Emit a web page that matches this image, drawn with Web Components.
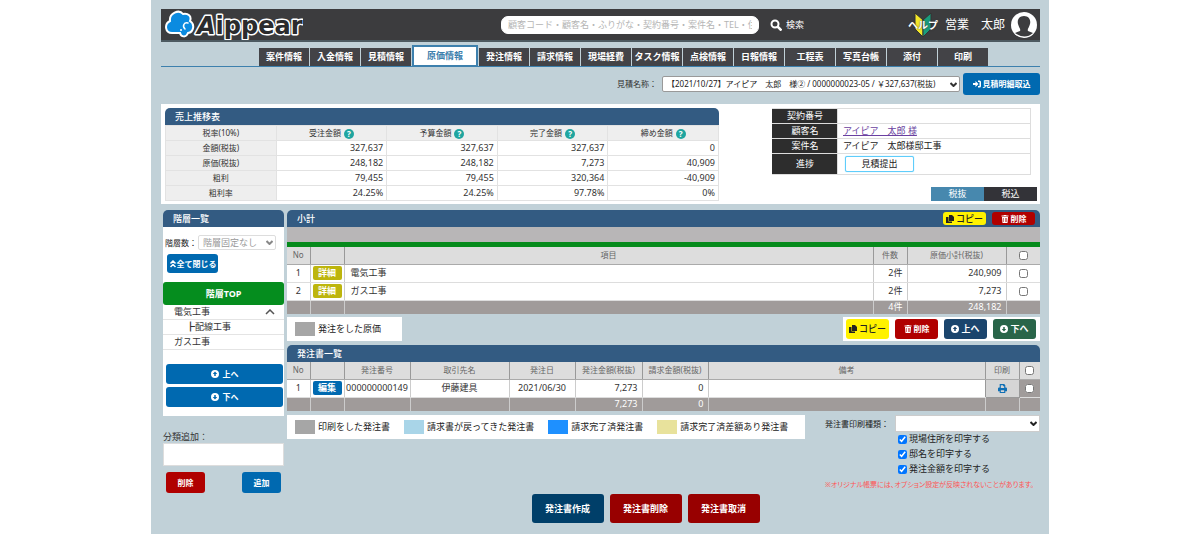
<!DOCTYPE html>
<html lang="ja">
<head>
<meta charset="utf-8">
<title>Aippear 原価情報</title>
<style>
body { margin: 0; background: #fff; color: #333; font: 9px/12px "Noto Sans", "Noto Sans CJK JP", sans-serif; }
</style>
</head>
<body>
<aip-app></aip-app>
<script>
const BASE = `<style>
*, *::before { box-sizing: border-box; }
:host { display: block; }
:host([hidden]) { display: none; }
button, input, select { font: inherit; color: inherit; margin: 0; }
input[type=checkbox] { width: 9px; height: 9px; display: block; }
.pick { display: grid; align-items: center; }
.pick select { grid-area: 1 / 1; width: 100%; min-width: 0; padding: 0 4px; appearance: none; }
.pick svg { grid-area: 1 / 1; justify-self: end; width: 7px; height: 5px; margin-right: 3px; pointer-events: none; fill: none; stroke: currentColor; stroke-width: 2; }
table { border-collapse: collapse; width: 100%; table-layout: fixed; font-size: 9px; line-height: 12px; }
th, td { padding: 0; font-weight: 400; }
</style>`;

const CHEVRON = '<svg viewBox="0 0 7 5" aria-hidden="true"><path d="M.5 1l3 3 3-3"/></svg>';

const define = (name, html, setup) => {
  const template = document.createElement('template');
  template.innerHTML = BASE + html;
  customElements.define(name, class extends HTMLElement {
    connectedCallback() {
      if (this.shadowRoot) return;
      this.attachShadow({ mode: 'open' }).append(template.content.cloneNode(true));
      if (setup) setup.call(this, this.shadowRoot);
    }
  });
};

const ICONS = {
  copy: '<path d="M6 0h6l4 4v8H6z"/><path d="M0 4h5v9h7v3H0z"/>',
  trash: '<path d="M1 1h4l1-1h4l1 1h4v2H1z"/><path fill-rule="evenodd" d="M2 4h12l-1 12H3zM5 6v8h1V6zm3 0v8h1V6zm2 0v8h1V6z"/>',
  up: '<path fill-rule="evenodd" d="M8 0a8 8 0 1 0 0 16A8 8 0 0 0 8 0zM8 3l4.500 5H9.500v4h-3V8h-3z"/>',
  down: '<path fill-rule="evenodd" d="M8 0a8 8 0 1 0 0 16A8 8 0 0 0 8 0zM8 13L3.500 8h3V4h3v4h3z"/>',
  enter: '<path d="M0 6h5V2l6 6-6 6v-4H0z"/><path d="M10 1h3q3 0 3 3v8q0 3-3 3h-3v-3h3V4h-3z"/>',
  collapse: '<path d="M3 7l5-5 5 5M3 14l5-5 5 5" fill="none" stroke="currentColor" stroke-width="3"/>',
  print: '<path fill-rule="evenodd" d="M3 0h8l2 2v4h1q2 0 2 2v5h-3v3H3v-3H0V8q0-2 2-2h1zM5 2v5h6V4H9V2zM5 11v3h6v-3z"/>'
};

define('aip-icon', `<style>
:host { display: inline-block; width: 8px; height: 8px; flex: none; }
svg { display: block; width: 100%; height: 100%; fill: currentColor; }
</style><svg viewBox="0 0 16 16" aria-hidden="true"></svg>`, function (root) {
  root.querySelector('svg').innerHTML = ICONS[this.getAttribute('name')] || '';
});

define('aip-button', `<style>
:host { display: inline-block; height: 20px; color: #fff; --fill: #0069b0; }
:host([tone=red]) { --fill: #b00000; font-size: 8px; }
:host([tone=crimson]) { --fill: #980000; }
:host([tone=navy]) { --fill: #1b456d; }
:host([tone=deep]) { --fill: #003f69; }
:host([tone=forest]) { --fill: #296549; }
:host([tone=green]) { --fill: #058d1e; }
:host([tone=olive]) { --fill: #bdb50d; }
:host([tone=yellow]) { --fill: #fff200; --weight: 500; color: #222; }
button { width: 100%; height: 100%; display: flex; align-items: center; justify-content: center; gap: var(--gap, 2px);
  padding: 0; border: 0; border-radius: var(--radius, 3px); background: var(--fill); font-weight: var(--weight, 700); white-space: nowrap; cursor: pointer; }
</style><button type="button"><slot></slot></button>`);

define('aip-header', `<style>
:host { display: flex; align-items: center; height: 33px; padding: 0 3px 0 4px; background: #3c3c3e; border-bottom: 2px solid #4d5a61; color: #fff; }
.logo { display: block; width: 138px; height: 31px; flex: none; }
form { display: flex; align-items: center; flex: 1; margin-left: 198px; }
input { width: 258px; height: 18px; padding: 0 6px; border: 1px solid #fff; border-radius: 7px; background: #fff; color: #333; }
input::placeholder { color: #b5b5b5; opacity: 1; }
form button { display: flex; align-items: center; gap: 4px; margin-left: 11px; padding: 0; border: 0; background: none; color: #fff; }
form svg { width: 12px; height: 12px; }
.help { display: grid; place-items: center; width: 30px; height: 28px; color: #fff; text-decoration: none; font: 700 10px/12px "Noto Sans CJK JP", sans-serif; text-shadow: 0 0 2px #333; }
.help svg, .help span { grid-area: 1 / 1; }
.help svg { width: 18px; height: 26px; }
.user { margin: 0 6px 0 7px; font-size: 12px; line-height: 16px; white-space: nowrap; }
.face { width: 26px; height: 26px; flex: none; }
</style>
<svg class="logo" viewBox="0 0 138 31" role="img" aria-label="Aippear">
  <path d="M7 24C0 24-1 15 5 12 4 4 14 0 18 5c5-1 9 2 7 7 5 3 4 11-2 12-2 5-7 4-8 0z" fill="#0b8be0" stroke="#fff" stroke-width="2"/>
  <path d="M23 14c-4-1-6 3-3 6" fill="none" stroke="#fff" stroke-width="1.500" stroke-linecap="round"/><circle cx="16" cy="21" r="1" fill="#fff"/>
  <text x="32" y="25" font-family="DejaVu Sans" font-size="24" font-weight="700" fill="#2b2b2d" stroke="#fff" stroke-width="3" stroke-linejoin="round" paint-order="stroke"><tspan font-style="italic">A</tspan>ippear</text>
</svg>
<form>
  <input type="text" aria-label="検索条件" placeholder="顧客コード・顧客名・ふりがな・契約番号・案件名・TEL・住所">
  <button type="button"><svg viewBox="0 0 12 12" fill="none" stroke="#fff"><circle cx="5" cy="5" r="3.500" stroke-width="2"/><path d="M7.500 7.500l4 4" stroke-width="2.500"/></svg>検索</button>
</form>
<a class="help" href="#help"><svg viewBox="0 0 18 26"><path d="M1 1l8 7v17l-8-8z" fill="#f5e829" stroke="#333"/><path d="M17 1L9 8v17l8-8z" fill="#1a9c7c" stroke="#333"/></svg><span>ヘルプ</span></a>
<span class="user">営業　太郎</span>
<svg class="face" viewBox="0 0 26 26"><circle cx="13" cy="13" r="13" fill="#fff"/><path d="M13 4c5 0 7 4 6 8-1 4-3 5-2 7l5 2q-8 7-18 0l5-2c1-2-1-3-2-7-1-4 1-8 6-8z" fill="#3c3c3e"/></svg>`);

define('aip-tabs', `<style>
:host { margin-top: 3px; }
nav { display: flex; align-items: flex-end; gap: 1px; height: 22px; padding-left: 98px; border-bottom: 1px solid #3d80ad; }
a { width: 50px; height: 18px; flex: none; background: #434347; color: #fff; font-weight: 700; line-height: 18px; text-align: center; text-decoration: none; white-space: nowrap; }
a[aria-current] { width: 66px; height: 22px; margin-bottom: -1px; border: 2px solid #3d80ad; background: #fff; color: #3d80ad; }
</style><nav></nav>`, function (root) {
  const names = ['案件情報', '入金情報', '見積情報', '原価情報', '発注情報', '請求情報', '現場経費', 'タスク情報', '点検情報', '日報情報', '工程表', '写真台帳', '添付', '印刷'];
  root.querySelector('nav').innerHTML = names.map(n => `<a href="#"${n === '原価情報' ? ' aria-current="page"' : ''}>${n}</a>`).join('');
});

define('aip-estimate', `<style>
:host { display: flex; align-items: center; justify-content: flex-end; gap: 3px; margin-top: 6px; }
label { margin-right: 2px; font-size: 8px; }
.pick { width: 298px; }
select { height: 16px; border: 1px solid #999; border-radius: 2px; background: #fff; color: #222; font-size: 8px; }
aip-button { width: 77px; height: 22px; font-size: 8px; }
</style>
<label for="estimate">見積名称：</label>
<div class="pick"><select id="estimate"><option>【2021/10/27】アイピア　太郎　様② / 0000000023-05 / ￥327,637(税抜)</option></select>${CHEVRON}</div>
<aip-button><aip-icon name="enter"></aip-icon>見積明細取込</aip-button>`);

define('aip-panel', `<style>
header { display: flex; align-items: center; gap: 6px; height: 17px; padding: 0 5px 0 10px; border-radius: 5px 5px 0 0; background: #335b82; color: #fff; }
h2 { flex: 1; margin: 0; font: 500 9px/17px "Noto Sans", "Noto Sans CJK JP", sans-serif; }
</style><header><h2></h2><slot name="actions"></slot></header><slot></slot>`, function (root) {
  root.querySelector('h2').textContent = this.getAttribute('heading');
});

define('aip-summary', `<style>
tr { height: 15px; }
th { background: #eee; font-size: 8px; }
th, td { border: 1px solid #e2e2e2; }
tbody td { padding-right: 3px; text-align: right; }
i { display: inline-block; width: 10px; height: 10px; margin-left: 3px; border-radius: 5px; background: #1fa5a0; color: #fff; font: 700 8px/10px "Noto Sans", sans-serif; vertical-align: middle; }
</style>
<aip-panel heading="売上推移表"><table>
<thead><tr><th>税率(10%)</th><th>受注金額<i>?</i></th><th>予算金額<i>?</i></th><th>完了金額<i>?</i></th><th>締め金額<i>?</i></th></tr></thead>
<tbody>
<tr><th>金額(税抜)</th><td>327,637</td><td>327,637</td><td>327,637</td><td>0</td></tr>
<tr><th>原価(税抜)</th><td>248,182</td><td>248,182</td><td>7,273</td><td>40,909</td></tr>
<tr><th>粗利</th><td>79,455</td><td>79,455</td><td>320,364</td><td>-40,909</td></tr>
<tr><th>粗利率</th><td>24.25%</td><td>24.25%</td><td>97.78%</td><td>0%</td></tr>
</tbody></table></aip-panel>`);

define('aip-deal', `<style>
table { color: #222; }
tr { height: 15px; }
tr:last-child { height: 21px; }
th { width: 65px; background: #2d2d2d; color: #fff; border: 1px solid #ddd; border-left-color: #2d2d2d; }
td { padding-left: 5px; border: 1px solid #ddd; }
a { color: #6a3fa0; }
td button { display: block; width: 69px; height: 16px; margin-left: 2px; padding: 0; border: 1px solid #5fcdfb; border-radius: 2px; background: #fff; line-height: 12px; box-shadow: 0 0 1px #5fcdfb; }
.tax { display: flex; justify-content: flex-end; margin: 12px -6px 0 0; }
.tax button { width: 53px; height: 14px; padding: 0; border: 0; background: #333338; color: #fff; line-height: 14px; }
.tax button[aria-pressed=true] { background: #4788ae; }
</style>
<table>
<tr><th>契約番号</th><td></td></tr>
<tr><th>顧客名</th><td><a href="#customer">アイピア　太郎 様</a></td></tr>
<tr><th>案件名</th><td>アイピア　太郎様邸工事</td></tr>
<tr><th>進捗</th><td><button type="button">見積提出</button></td></tr>
</table>
<div class="tax"><button type="button" aria-pressed="true">税抜</button><button type="button" aria-pressed="false">税込</button></div>`);

define('aip-tree', `<style>
.card { height: 189px; background: #fff; }
.depth { display: flex; align-items: center; gap: 1px; padding: 8px 8px 0 2px; font-size: 8px; white-space: nowrap; color: #222; }
.depth .pick { flex: 1; min-width: 0; color: #888; }
.depth select { height: 15px; border: 1px solid #ddd; border-radius: 2px; background: #fff; color: #999; font-size: 9px; }
.close { display: block; width: 51px; height: 19px; margin: 4px 0 9px 4px; font-size: 8px; --gap: 0px; }
.top { display: block; height: 23px; }
ul { margin: 0; padding: 0; list-style: none; font-size: 9px; }
li { display: flex; align-items: center; justify-content: space-between; height: 15px; padding: 0 9px 0 11px; border-bottom: 1px solid #e4e4e4; }
li.child { padding-left: 23px; }
li svg { width: 10px; height: 6px; }
.move { display: grid; gap: 3px; padding: 14px 1px 0 3px; --gap: 4px; }
.move aip-button { font-size: 8px; }
.add { margin-top: 15px; }
.add label { display: block; }
.add input { display: block; width: 100%; height: 23px; border: 1px solid #ddd; background: #fff; }
.row { display: flex; justify-content: space-between; padding: 6px 3px 0; font-size: 8px; }
.row aip-button { width: 39px; height: 21px; }
</style>
<aip-panel heading="階層一覧"><div class="card">
<div class="depth"><label for="depth">階層数：</label><div class="pick"><select id="depth"><option>階層固定なし</option></select>${CHEVRON}</div></div>
<aip-button class="close"><aip-icon name="collapse"></aip-icon>全て閉じる</aip-button>
<aip-button class="top" tone="green">階層TOP</aip-button>
<ul><li>電気工事<svg viewBox="0 0 10 6"><path d="M1 5l4-4 4 4" fill="none" stroke="#555" stroke-width="1.500"/></svg></li><li class="child">┣配線工事</li><li>ガス工事</li></ul>
<div class="move"><aip-button><aip-icon name="up"></aip-icon>上へ</aip-button><aip-button><aip-icon name="down"></aip-icon>下へ</aip-button></div>
</div></aip-panel>
<div class="add"><label for="category">分類追加：</label><input id="category"></div>
<div class="row"><aip-button tone="red">削除</aip-button><aip-button>追加</aip-button></div>`);

const GRID = `<style>
table { color: #333; }
th, td { border-left: 1px solid #ccc; }
tr > :first-child { border-left: 0; }
thead tr { height: 17px; background: #ddd; color: #666; }
thead th { font-size: 8px; border-color: #999; border-bottom: 1px solid #aaa; }
tbody tr { height: 18px; background: #fff; }
tbody td { border-bottom: 1px solid #ddd; }
tfoot tr { height: 14px; background: #a09b9a; color: #fff; }
.c { text-align: center; }
.r { text-align: right; padding-right: 4px; }
.l { padding-left: 6px; }
td aip-button { display: block; width: 29px; height: 14px; margin: 0 auto; --radius: 2px; }
td input[type=checkbox], th input[type=checkbox] { margin: 0 auto; }
</style>`;

define('aip-subtotal', GRID + `<style>
.bar { height: 20px; background: #b8b6b7; border-bottom: 5px solid #058a1b; }
aip-button[slot] { width: 43px; height: 13px; }
</style>
<aip-panel heading="小計">
<aip-button slot="actions" tone="yellow"><aip-icon name="copy"></aip-icon>コピー</aip-button>
<aip-button slot="actions" tone="red"><aip-icon name="trash"></aip-icon>削除</aip-button>
<div class="bar"></div>
<table><colgroup><col style="width:23px"><col style="width:34px"><col><col style="width:34px"><col style="width:99px"><col style="width:34px"></colgroup>
<thead><tr><th>No</th><th></th><th>項目</th><th>件数</th><th>原価小計(税抜)</th><th><input type="checkbox" aria-label="全選択"></th></tr></thead>
<tbody>
<tr><td class="c">1</td><td><aip-button tone="olive">詳細</aip-button></td><td class="l">電気工事</td><td class="r">2件</td><td class="r">240,909</td><td><input type="checkbox" aria-label="電気工事を選択"></td></tr>
<tr><td class="c">2</td><td><aip-button tone="olive">詳細</aip-button></td><td class="l">ガス工事</td><td class="r">2件</td><td class="r">7,273</td><td><input type="checkbox" aria-label="ガス工事を選択"></td></tr>
</tbody>
<tfoot><tr><td></td><td></td><td></td><td class="r">4件</td><td class="r">248,182</td><td></td></tr></tfoot>
</table></aip-panel>`);

define('aip-orders', GRID + `<style>
td.print { background: #d5d5d5; color: #0f6fb5; text-align: center; border: 1px solid #999; }
td.print aip-icon { width: 9px; height: 9px; vertical-align: middle; }
td.print button { padding: 0; border: 0; background: none; color: inherit; display: block; margin: 0 auto; line-height: 9px; }
td.dark { background: #a09b9a; }
</style>
<aip-panel heading="発注書一覧">
<table><colgroup><col style="width:23px"><col style="width:34px"><col style="width:66px"><col style="width:99px"><col style="width:66px"><col style="width:67px"><col style="width:66px"><col><col style="width:34px"><col style="width:21px"></colgroup>
<thead><tr><th>No</th><th></th><th>発注番号</th><th>取引先名</th><th>発注日</th><th>発注金額(税抜)</th><th>請求金額(税抜)</th><th>備考</th><th>印刷</th><th><input type="checkbox" aria-label="全選択"></th></tr></thead>
<tbody><tr><td class="c">1</td><td><aip-button>編集</aip-button></td><td class="c">000000000149</td><td class="c">伊藤建具</td><td class="c">2021/06/30</td><td class="r">7,273</td><td class="r">0</td><td></td><td class="print"><button type="button" aria-label="印刷"><aip-icon name="print"></aip-icon></button></td><td class="dark"><input type="checkbox" aria-label="発注書を選択"></td></tr></tbody>
<tfoot><tr><td></td><td></td><td></td><td></td><td></td><td class="r">7,273</td><td class="r">0</td><td></td><td></td><td></td></tr></tfoot>
</table></aip-panel>`);

define('aip-legend', `<style>
:host { display: flex; align-items: center; gap: 12px; height: 24px; padding: 0 8px; background: #fff; color: #222; white-space: nowrap; }
</style><slot></slot>`);

define('aip-key', `<style>
:host { display: flex; align-items: center; gap: 3px; }
span { width: 20px; height: 14px; background: var(--swatch); }
</style><span></span><slot></slot>`);

define('aip-print', `<style>
:host { color: #222; }
.kind { display: flex; align-items: center; gap: 6px; font-size: 8px; white-space: nowrap; }
.pick { width: 145px; }
select { height: 17px; border: 1px solid #ccc; background: #fff; }
.opts { display: grid; gap: 3px; margin: 1px 0 0 73px; }
.opts label { display: flex; align-items: center; gap: 2px; }
p { margin: 4px 0 0; color: #f55; font-size: 7px; font-feature-settings: "palt"; white-space: nowrap; }
</style>
<div class="kind"><label for="kind">発注書印刷種類：</label><div class="pick"><select id="kind"><option></option></select>${CHEVRON}</div></div>
<div class="opts">
<label><input type="checkbox" checked>現場住所を印字する</label>
<label><input type="checkbox" checked>邸名を印字する</label>
<label><input type="checkbox" checked>発注金額を印字する</label>
</div>
<p>※オリジナル帳票には、オプション設定が反映されないことがあります。</p>`);

define('aip-app', `<style>
:host { min-height: 100vh; margin: 0 151px; padding: 9px 9px 11px 10px; background: #c1d1d8; }
.overview { display: flex; justify-content: space-between; height: 100px; margin-top: 9px; padding: 4px 9px 0 4px; background: #fff; }
aip-summary { width: 554px; }
aip-deal { width: 259px; }
.work { display: grid; grid-template-columns: 121px minmax(0, 1fr); gap: 3px; margin: 6px 0 0 2px; }
.line { display: flex; justify-content: space-between; align-items: flex-start; margin: 3px 0 4px; }
.tools { display: flex; gap: 6px; padding: 2px 4px 2px 3px; background: #fff; }
.tools aip-button { width: 43px; }
.wide { gap: 14px; width: 518px; }
.first { width: 115px; }
.end { margin: 4px 0 3px; }
.actions { display: flex; justify-content: center; gap: 6px; margin-right: 36px; }
.actions aip-button { width: 72px; height: 29px; font-size: 9px; }
</style>
<aip-header></aip-header>
<aip-tabs></aip-tabs>
<aip-estimate></aip-estimate>
<section class="overview"><aip-summary></aip-summary><aip-deal></aip-deal></section>
<main class="work">
<aip-tree></aip-tree>
<div>
<aip-subtotal></aip-subtotal>
<div class="line">
<aip-legend class="first"><aip-key style="--swatch:#a6a6a6">発注をした原価</aip-key></aip-legend>
<div class="tools"><aip-button tone="yellow"><aip-icon name="copy"></aip-icon>コピー</aip-button><aip-button tone="red"><aip-icon name="trash"></aip-icon>削除</aip-button><aip-button tone="navy"><aip-icon name="up"></aip-icon>上へ</aip-button><aip-button tone="forest"><aip-icon name="down"></aip-icon>下へ</aip-button></div>
</div>
<aip-orders></aip-orders>
<div class="line end">
<aip-legend class="wide"><aip-key style="--swatch:#a6a6a6">印刷をした発注書</aip-key><aip-key style="--swatch:#a9d5e8">請求書が戻ってきた発注書</aip-key><aip-key style="--swatch:#1e90ff">請求完了済発注書</aip-key><aip-key style="--swatch:#e8e29c">請求完了済差額あり発注書</aip-key></aip-legend>
<aip-print></aip-print>
</div>
<div class="actions"><aip-button tone="deep">発注書作成</aip-button><aip-button tone="crimson">発注書削除</aip-button><aip-button tone="crimson">発注書取消</aip-button></div>
</div>
</main>`);
</script>
</body>
</html>
